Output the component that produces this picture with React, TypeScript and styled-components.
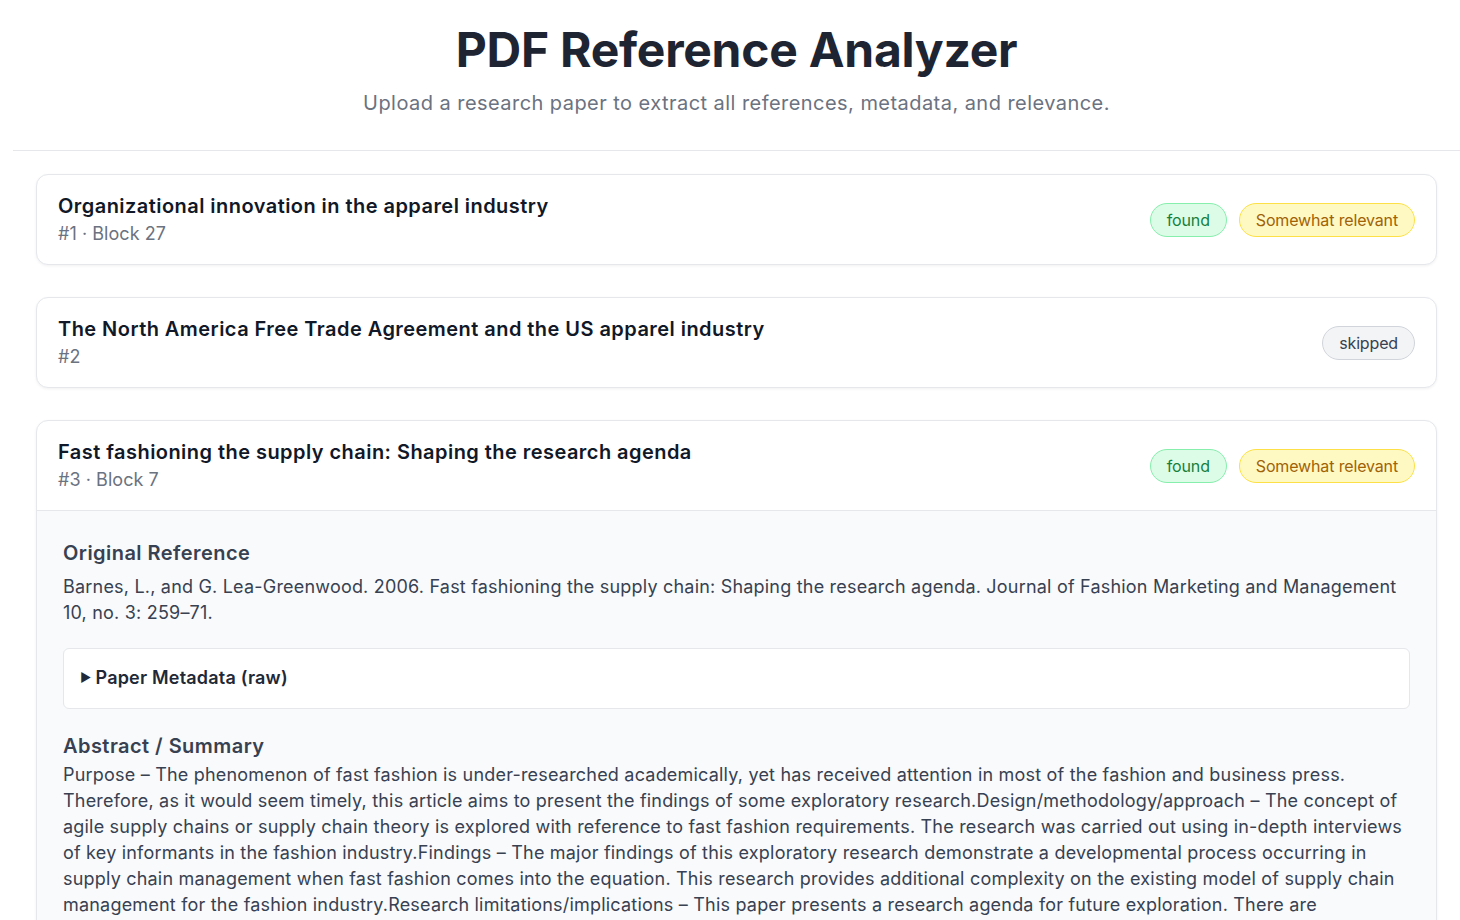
import React from "react";
import styled, { createGlobalStyle } from "styled-components";

const GlobalStyle = createGlobalStyle`
    html, body {
        margin: 0;
        padding: 0;
        background: #ffffff;
        overflow: hidden;
    }
    body {
        font-family: Inter, "Noto Sans", "Liberation Sans", sans-serif;
        color: #111827;
        -webkit-font-smoothing: antialiased;
    }
    * {
        box-sizing: border-box;
    }
`;

const Page = styled.div`
    padding-left: 13px;
`;

const Header = styled.header`
    text-align: center;
    padding: 22px 0 34px;
    border-bottom: 1px solid #e5e7eb;
`;

const Title = styled.h1`
    margin: 0;
    font-size: 48px;
    line-height: 56px;
    font-weight: 700;
    color: #1e2432;
    letter-spacing: -0.25px;
`;

const Subtitle = styled.p`
    margin: 12px 0 0;
    font-size: 20px;
    line-height: 26px;
    color: #6b7280;
    letter-spacing: 0.45px;
`;

const List = styled.main`
    padding: 23px 23px 0;
`;

const Card = styled.section`
    background: #ffffff;
    border: 1px solid #e5e7eb;
    border-radius: 12px;
    box-shadow: 0 1px 3px rgba(17, 24, 39, 0.06);
    margin-bottom: 32px;
    overflow: hidden;
`;

const CardHead = styled.div<{ $open?: boolean }>`
    display: flex;
    align-items: center;
    justify-content: space-between;
    padding: 17px 21px 17px;
    border-bottom: ${(p) => (p.$open ? "1px solid #e5e7eb" : "none")};
`;

const HeadText = styled.div`
    display: flex;
    flex-direction: column;
    gap: 1px;
`;

const RefTitle = styled.h2`
    margin: 0;
    font-size: 20px;
    line-height: 28px;
    font-weight: 600;
    color: #111827;
    letter-spacing: 0.45px;
`;

const Meta = styled.div`
    font-size: 18px;
    line-height: 26px;
    color: #6b7280;
    letter-spacing: 0.05px;
`;

const Badges = styled.div`
    display: flex;
    gap: 12px;
`;

const tones = {
    green: { bg: "#dcfce7", border: "#86efac", fg: "#15803d" },
    yellow: { bg: "#fef9c3", border: "#fde047", fg: "#a16207" },
    grey: { bg: "#f3f4f6", border: "#d1d5db", fg: "#374151" },
};

type Tone = keyof typeof tones;

const Badge = styled.span<{ $tone: Tone }>`
    display: inline-block;
    padding: 4px 16px;
    font-size: 16px;
    line-height: 24px;
    letter-spacing: -0.15px;
    border-radius: 999px;
    background: ${(p) => tones[p.$tone].bg};
    border: 1px solid ${(p) => tones[p.$tone].border};
    color: ${(p) => tones[p.$tone].fg};
`;

const CardBody = styled.div`
    background: #f9fafb;
    padding: 28px 26px 24px;
`;

const SectionTitle = styled.h3<{ $gap: number }>`
    margin: 0 0 ${(p) => p.$gap}px;
    font-size: 20px;
    line-height: 28px;
    font-weight: 600;
    color: #374151;
    letter-spacing: 0.45px;
`;

const Para = styled.p`
    margin: 0;
    font-size: 18px;
    line-height: 26px;
    color: #374151;
    letter-spacing: 0.2px;
`;

const Details = styled.details`
    margin: 22px 0 23px;
    background: #ffffff;
    border: 1px solid #e5e7eb;
    border-radius: 6px;
    padding: 16px 16px 15px;
`;

const Summary = styled.summary`
    font-size: 18px;
    line-height: 26px;
    font-weight: 600;
    color: #1f2937;
    letter-spacing: 0.2px;
    cursor: pointer;
    list-style: none;

    &::-webkit-details-marker {
        display: none;
    }
    &::before {
        content: "▶";
        font-size: 12px;
        margin-right: 4px;
        position: relative;
        top: -2px;
    }
`;

type Reference = {
    title: string;
    meta: string;
    badges: { label: string; tone: Tone }[];
    original?: string;
    abstract?: string;
};

const references: Reference[] = [
    {
        title: "Organizational innovation in the apparel industry",
        meta: "#1 · Block 27",
        badges: [
            { label: "found", tone: "green" },
            { label: "Somewhat relevant", tone: "yellow" },
        ],
    },
    {
        title: "The North America Free Trade Agreement and the US apparel industry",
        meta: "#2",
        badges: [{ label: "skipped", tone: "grey" }],
    },
    {
        title: "Fast fashioning the supply chain: Shaping the research agenda",
        meta: "#3 · Block 7",
        badges: [
            { label: "found", tone: "green" },
            { label: "Somewhat relevant", tone: "yellow" },
        ],
        original:
            "Barnes, L., and G. Lea-Greenwood. 2006. Fast fashioning the supply chain: Shaping the research agenda. Journal of Fashion Marketing and Management 10, no. 3: 259–71.",
        abstract:
            "Purpose – The phenomenon of fast fashion is under-researched academically, yet has received attention in most of the fashion and business press. Therefore, as it would seem timely, this article aims to present the findings of some exploratory research.Design/methodology/approach – The concept of agile supply chains or supply chain theory is explored with reference to fast fashion requirements. The research was carried out using in-depth interviews of key informants in the fashion industry.Findings – The major findings of this exploratory research demonstrate a developmental process occurring in supply chain management when fast fashion comes into the equation. This research provides additional complexity on the existing model of supply chain management for the fashion industry.Research limitations/implications – This paper presents a research agenda for future exploration. There are limitations to the research as it is exploratory in nature and the sample size is small.",
    },
];

function ReferenceCard({ item }: { item: Reference }) {
    const open = Boolean(item.original);
    return (
        <Card>
            <CardHead $open={open}>
                <HeadText>
                    <RefTitle>{item.title}</RefTitle>
                    <Meta>{item.meta}</Meta>
                </HeadText>
                <Badges>
                    {item.badges.map((b) => (
                        <Badge key={b.label} $tone={b.tone}>
                            {b.label}
                        </Badge>
                    ))}
                </Badges>
            </CardHead>
            {open && (
                <CardBody>
                    <SectionTitle $gap={7}>Original Reference</SectionTitle>
                    <Para>{item.original}</Para>
                    <Details>
                        <Summary>Paper Metadata (raw)</Summary>
                    </Details>
                    <SectionTitle $gap={2}>Abstract / Summary</SectionTitle>
                    <Para>{item.abstract}</Para>
                </CardBody>
            )}
        </Card>
    );
}

export default function App() {
    return (
        <Page>
            <GlobalStyle />
            <Header>
                <Title>PDF Reference Analyzer</Title>
                <Subtitle>
                    Upload a research paper to extract all references, metadata, and relevance.
                </Subtitle>
            </Header>
            <List>
                {references.map((r, i) => (
                    <ReferenceCard key={i} item={r} />
                ))}
            </List>
        </Page>
    );
}
